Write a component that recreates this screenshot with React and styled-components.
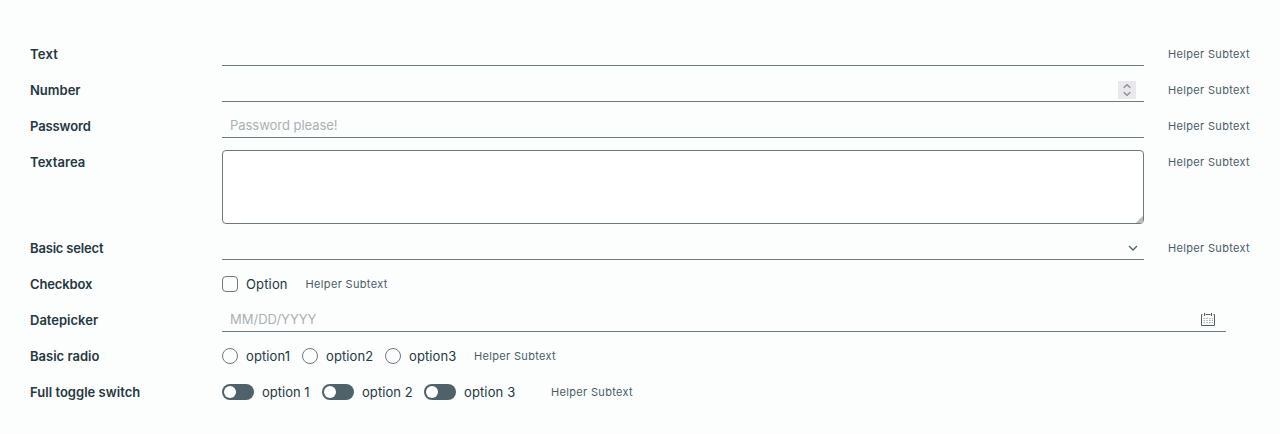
import React from "react";
import styled, { createGlobalStyle } from "styled-components";

const line = "#6a7a81";

const GlobalStyle = createGlobalStyle`
  * { box-sizing: border-box; }
  body {
    margin: 0;
    background: #fcfdfd;
    color: #263840;
    font-family: Inter, "Open Sans", sans-serif;
    font-size: 13px;
    line-height: 24px;
  }
`;

const Form = styled.form`
  display: flex;
  flex-direction: column;
  gap: 12px;
  height: 434px;
  padding: 42px 30px 0;
  overflow: hidden;
`;

const Row = styled.div`
  display: flex;
  align-items: flex-start;
  min-height: 24px;
`;

const Label = styled.label`
  flex: 0 0 192px;
  height: 24px;
  line-height: 25px;
  font-weight: 600;
  white-space: nowrap;
  letter-spacing: ${(p) => p.$spacing || 0}px;
`;

const Helper = styled.span`
  flex: 0 0 82px;
  height: 24px;
  margin-left: ${(p) => p.$gap ?? 24}px;
  font-size: 11px;
  line-height: 25px;
  letter-spacing: 0.33px;
  color: #4a5c66;
  white-space: nowrap;
`;

const Field = styled.div`
  flex: 1;
  display: flex;
  align-items: center;
  justify-content: space-between;
  height: 24px;
  margin-right: ${(p) => p.$inset || 0}px;
  padding-right: ${(p) => p.$end ?? 8}px;
  border-bottom: 1px solid ${line};
`;

const Input = styled.input`
  flex: 1;
  min-width: 0;
  height: 23px;
  padding: 0 8px 1px;
  border: 0;
  outline: 0;
  background: transparent;
  font: inherit;
  letter-spacing: ${(p) => p.$spacing || 0}px;
  &::placeholder { color: #a9b1b5; opacity: 1; }
`;

const TextArea = styled.textarea`
  flex: 1;
  display: block;
  height: 74px;
  border: 1px solid ${line};
  border-radius: 4px;
  background: #fff;
  outline: 0;
  resize: vertical;
  &::-webkit-resizer {
    background: linear-gradient(135deg, transparent 76%, #b9bcbe 77%);
  }
`;

const Spinner = styled.span`
  display: flex;
  width: 18px;
  height: 18px;
  margin-top: 1px;
  background: #e9e9ed;
`;

const Option = styled.label`
  display: flex;
  align-items: center;
  flex: 0 0 ${(p) => p.$width}px;
  gap: 8px;
  height: 24px;
  line-height: 26px;
  letter-spacing: ${(p) => p.$spacing || 0}px;
  white-space: nowrap;
`;

const Box = styled.span`
  flex: none;
  width: 16px;
  height: 16px;
  border: 1px solid ${line};
  border-radius: ${(p) => (p.$round ? "50%" : "4px")};
`;

const Toggle = styled.span`
  flex: none;
  display: flex;
  align-items: center;
  width: 32px;
  height: 16px;
  padding: 0 2px;
  border-radius: 8px;
  background: #4f6169;
  &::before {
    content: "";
    width: 12px;
    height: 12px;
    border-radius: 50%;
    background: #fff;
  }
`;

const Calendar = () => (
  <svg width="16" height="16" viewBox="0 0 16 16" fill="none" stroke="#4f6169">
    <path d="M2.5 2.5H1.5V13.5H14.5V2.5H13.5M5.5 2.5H10.5" />
    <path d="M4.5 1V4M11.5 1V4" />
    <path d="M3.5 6.5H13M3.5 8.5H13M3.5 10.5H13" strokeDasharray="1.5 1.3" opacity=".5" />
  </svg>
);

export default function App() {
  return (
    <>
      <GlobalStyle />
      <Form>
        <Row>
          <Label $spacing={0.2}>Text</Label>
          <Field><Input /></Field>
          <Helper>Helper Subtext</Helper>
        </Row>
        <Row>
          <Label>Number</Label>
          <Field>
            <Input />
            <Spinner>
              <svg width="18" height="18" fill="none" stroke="#8f8f9d" strokeWidth="1.5">
                <path d="M5.7 6.8L9 3.7L12.3 6.8M5.7 11.2L9 14.3L12.3 11.2" />
              </svg>
            </Spinner>
          </Field>
          <Helper>Helper Subtext</Helper>
        </Row>
        <Row>
          <Label $spacing={-0.12}>Password</Label>
          <Field><Input type="password" placeholder="Password please!" $spacing={-0.04} /></Field>
          <Helper>Helper Subtext</Helper>
        </Row>
        <Row>
          <Label $spacing={0.06}>Textarea</Label>
          <TextArea />
          <Helper>Helper Subtext</Helper>
        </Row>
        <Row>
          <Label $spacing={-0.18}>Basic select</Label>
          <Field $end={6}>
            <span />
            <svg width="10" height="8" fill="none" stroke="#4f6169" strokeWidth="1.3">
              <path d="M1 2L5 6L9 2" />
            </svg>
          </Field>
          <Helper>Helper Subtext</Helper>
        </Row>
        <Row>
          <Label $spacing={-0.15}>Checkbox</Label>
          <Option $width={66} $spacing={0.15}><Box />Option</Option>
          <Helper $gap={17.6}>Helper Subtext</Helper>
        </Row>
        <Row>
          <Label>Datepicker</Label>
          <Field $inset={24} $end={10}>
            <Input placeholder="MM/DD/YYYY" />
            <Calendar />
          </Field>
        </Row>
        <Row>
          <Label>Basic radio</Label>
          <Option $width={80} $spacing={0.1}><Box $round />option1</Option>
          <Option $width={83} $spacing={0.1}><Box $round />option2</Option>
          <Option $width={71} $spacing={0.1}><Box $round />option3</Option>
          <Helper $gap={17.6}>Helper Subtext</Helper>
        </Row>
        <Row>
          <Label $spacing={0.03}>Full toggle switch</Label>
          <Option $width={100}><Toggle />option 1</Option>
          <Option $width={102} $spacing={0.08}><Toggle />option 2</Option>
          <Option $width={92} $spacing={0.12}><Toggle />option 3</Option>
          <Helper $gap={35}>Helper Subtext</Helper>
        </Row>
      </Form>
    </>
  );
}
